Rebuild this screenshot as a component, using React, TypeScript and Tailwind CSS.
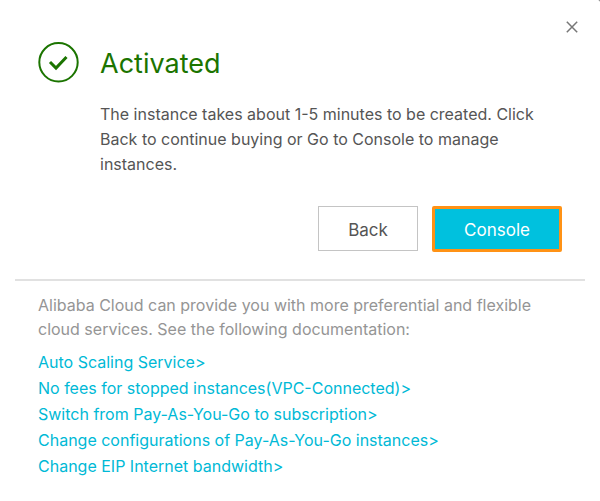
import React from 'react';

const docLinks = [
  'Auto Scaling Service>',
  'No fees for stopped instances(VPC-Connected)>',
  'Switch from Pay-As-You-Go to subscription>',
  'Change configurations of Pay-As-You-Go instances>',
  'Change EIP Internet bandwidth>',
];

export default function App() {
  return (
    <div className="bg-[#666666] font-['Inter',sans-serif] text-[#555555]">
      <div
        role="dialog"
        aria-labelledby="dialog-title"
        className="relative min-h-screen rounded-tr-xs bg-white px-[15px] pt-[42px]"
      >
        <button type="button" aria-label="Close" className="absolute right-[21px] top-[20px] p-px text-[#777777]">
          <svg viewBox="0 0 12 12" className="h-3 w-3" fill="none" stroke="currentColor" strokeWidth="1.5">
            <path d="M.8.8l10.4 10.4M11.2.8L.8 11.2" />
          </svg>
        </button>

        {/* Result */}
        <div className="flex gap-[21px] px-[23px]">
          <svg viewBox="0 0 41 41" className="h-[41px] w-[41px] shrink-0" fill="none" stroke="#1b7400">
            <circle cx="20.5" cy="20.3" r="19.2" strokeWidth="2" />
            <path d="M12 20l6 6L28.5 15" strokeWidth="3" />
          </svg>
          <div className="min-w-0">
            <h1 id="dialog-title" className="text-[27px] leading-[44px] text-[#1b7400]">
              Activated
            </h1>
            <p className="mt-4 text-base leading-[25px]">
              The instance takes about 1-5 minutes to be created. Click Back to continue buying or Go to Console to
              manage instances.
            </p>
          </div>
        </div>

        {/* Actions */}
        <div className="mt-[29px] flex justify-end gap-[14px] pr-[23px]">
          <button type="button" className="h-[45px] w-[100px] border border-[#c4c4c4] pt-1 text-[17px]">
            Back
          </button>
          <button
            type="button"
            className="h-[46px] w-[130px] rounded-xs border-3 border-[#ff9215] bg-[#00c1de] pt-1 text-[17px] text-white"
          >
            Console
          </button>
        </div>

        {/* Documentation */}
        <div className="mt-[27px] border-t-2 border-[#e1e1e1] px-[23px] pt-[12px] text-base">
          <p className="leading-6 text-[#959595]">
            Alibaba Cloud can provide you with more preferential and flexible cloud services. See the following
            documentation:
          </p>
          <ul className="mt-2 leading-[26px] text-[#00b9d6]">
            {docLinks.map(label => (
              <li key={label}>
                <a href="#">{label}</a>
              </li>
            ))}
          </ul>
        </div>
      </div>
    </div>
  );
}
